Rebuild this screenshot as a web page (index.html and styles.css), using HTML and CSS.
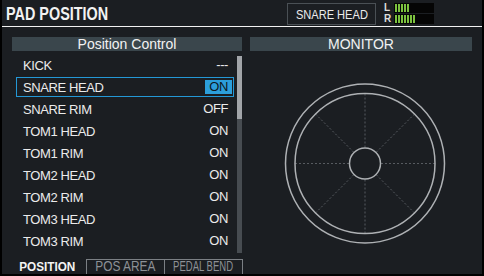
FILE: index.html
```html
<!DOCTYPE html>
<html lang="en">
<head>
    <meta charset="UTF-8">
    <title>Pad Position</title>
    <link rel="stylesheet" href="styles.css">
</head>
<body>
    <div class="screen">
        <header class="topbar">
            <h1 class="title">PAD POSITION</h1>
            <div class="pad-name"><span>SNARE HEAD</span></div>
            <div class="meter">
                <div class="meter-row">
                    <span class="ch">L</span>
                    <div class="meter-bar"><i></i><i></i><i></i><i></i><i></i></div>
                </div>
                <div class="meter-row">
                    <span class="ch">R</span>
                    <div class="meter-bar"><i></i><i></i><i></i><i></i><i></i><i></i><i></i></div>
                </div>
            </div>
        </header>

        <main class="panels">
            <section class="panel panel-left">
                <div class="panel-head">Position Control</div>
                <div class="list-wrap">
                    <ul class="pad-list">
                        <li class="row"><span>KICK</span><span class="val">---</span></li>
                        <li class="row selected"><span>SNARE HEAD</span><span class="val">ON</span></li>
                        <li class="row"><span>SNARE RIM</span><span class="val">OFF</span></li>
                        <li class="row"><span>TOM1 HEAD</span><span class="val">ON</span></li>
                        <li class="row"><span>TOM1 RIM</span><span class="val">ON</span></li>
                        <li class="row"><span>TOM2 HEAD</span><span class="val">ON</span></li>
                        <li class="row"><span>TOM2 RIM</span><span class="val">ON</span></li>
                        <li class="row"><span>TOM3 HEAD</span><span class="val">ON</span></li>
                        <li class="row"><span>TOM3 RIM</span><span class="val">ON</span></li>
                    </ul>
                    <div class="scrollbar"><div class="thumb"></div></div>
                </div>
            </section>

            <section class="panel panel-right">
                <div class="panel-head">MONITOR</div>
                <!-- drum head view -->
                <svg class="monitor" width="222" height="200" viewBox="0 0 222 200">
                    <g stroke="#575b60" stroke-width="1" stroke-dasharray="2 2" fill="none">
                        <line x1="45" y1="112.5" x2="99" y2="112.5"/>
                        <line x1="131" y1="112.5" x2="185" y2="112.5"/>
                        <line x1="115" y1="42.5" x2="115" y2="96.5"/>
                        <line x1="115" y1="128.5" x2="115" y2="182.5"/>
                        <line x1="65.5" y1="63" x2="103.7" y2="101.2"/>
                        <line x1="126.3" y1="123.8" x2="164.5" y2="162"/>
                        <line x1="164.5" y1="63" x2="126.3" y2="101.2"/>
                        <line x1="103.7" y1="123.8" x2="65.5" y2="162"/>
                    </g>
                    <g stroke="#aeb1b4" stroke-width="1.5" fill="none">
                        <circle cx="115" cy="112.5" r="79.5"/>
                        <circle cx="115" cy="112.5" r="70"/>
                        <circle cx="115" cy="112.5" r="15.5"/>
                    </g>
                </svg>
            </section>
        </main>

        <nav class="tabs">
            <div class="tab active"><span class="sq-pos">POSITION</span></div>
            <div class="tab"><span class="sq-area">POS AREA</span></div>
            <div class="tab"><span class="sq-bend">PEDAL BEND</span></div>
        </nav>
    </div>
</body>
</html>
```

FILE: styles.css
```css
body {
    margin: 0;
    background-color: #000;
    font-family: "Liberation Sans", Arial, sans-serif;
    color: #ececec;
}

.screen {
    width: 480px;
    height: 274px;
    margin: 0 2px;
    background-color: #1b1e22;
    overflow: hidden;
}

/* top bar */
.topbar {
    display: flex;
    height: 26px;
    border-bottom: 1px solid #f2f2f2;
    padding-left: 4px;
    padding-right: 48px;
}

.title {
    flex: 1;
    margin: 0;
    padding-top: 3px;
    font-size: 18px;
    line-height: 23px;
    font-weight: bold;
    color: #f2f2f2;
    white-space: nowrap;
    transform: scaleX(0.8);
    transform-origin: left;
}

.pad-name {
    width: 87px;
    height: 20px;
    margin-top: 3px;
    border: 1px solid #4a5055;
    font-size: 13.5px;
    line-height: 21px;
    text-align: center;
    white-space: nowrap;
}

.pad-name span {
    display: inline-block;
    transform: scaleX(0.82);
}

.meter {
    display: flex;
    flex-direction: column;
    gap: 1px;
    margin-left: 8px;
    padding-top: 3px;
}

.meter-row {
    display: flex;
    align-items: center;
    height: 10px;
}

.ch {
    width: 10px;
    font-size: 10px;
    font-weight: bold;
    line-height: 10px;
    color: #ddd;
}

.meter-bar {
    display: flex;
    gap: 1px;
    width: 38px;
    height: 8px;
    padding: 1px;
    background-color: #050505;
}

.meter-bar i {
    width: 2px;
    background-color: #7cc23f;
}

/* panels */
.panels {
    display: flex;
    gap: 8px;
    height: 222px;
    margin-top: 10px;
    padding-left: 10px;
}

.panel-left {
    width: 230px;
}

.panel-right {
    width: 222px;
}

.panel-head {
    height: 14px;
    background-color: #3a464c;
    font-size: 14px;
    line-height: 15px;
    text-align: center;
    color: #f2f2f2;
}

.list-wrap {
    display: flex;
}

.pad-list {
    width: 225px;
    margin: 0;
    padding: 2px 0 0;
    list-style: none;
}

.row {
    display: flex;
    align-items: center;
    justify-content: space-between;
    height: 18px;
    margin: 2px 3px 0 4px;
    padding: 0 1px 0 6px;
    border: 1px solid transparent;
    font-size: 13px;
    letter-spacing: -0.4px;
    color: #ebebeb;
}

.val {
    padding: 0 4px;
    line-height: 14px;
}

.selected {
    border-color: #2498d6;
}

.selected .val {
    background-color: #2c9fdb;
    color: #0e1820;
}

.scrollbar {
    width: 5px;
    height: 197px;
    margin-top: 5px;
    background-color: #474c51;
}

.thumb {
    height: 63px;
    background-color: #a2a5a9;
}

.monitor {
    display: block;
}

/* bottom tabs */
.tabs {
    display: flex;
    height: 15px;
    padding-left: 6px;
}

.tab {
    display: flex;
    justify-content: center;
    width: 77px;
    border: 1px solid #7b7f84;
    border-bottom: none;
    border-left: none;
    font-size: 14px;
    line-height: 13px;
    white-space: nowrap;
    color: #8d9196;
}

.tab span {
    display: inline-block;
    flex-shrink: 0;
}

.tab:nth-child(2) {
    border-left: 1px solid #7b7f84;
}

.tab.active {
    width: 78px;
    border: none;
    padding-top: 1px;
    font-size: 13.5px;
    font-weight: bold;
    color: #f4f4f4;
}

.sq-pos {
    transform: scaleX(0.87);
}

.sq-area {
    transform: scaleX(0.85);
}

.sq-bend {
    transform: scaleX(0.68);
}
```
